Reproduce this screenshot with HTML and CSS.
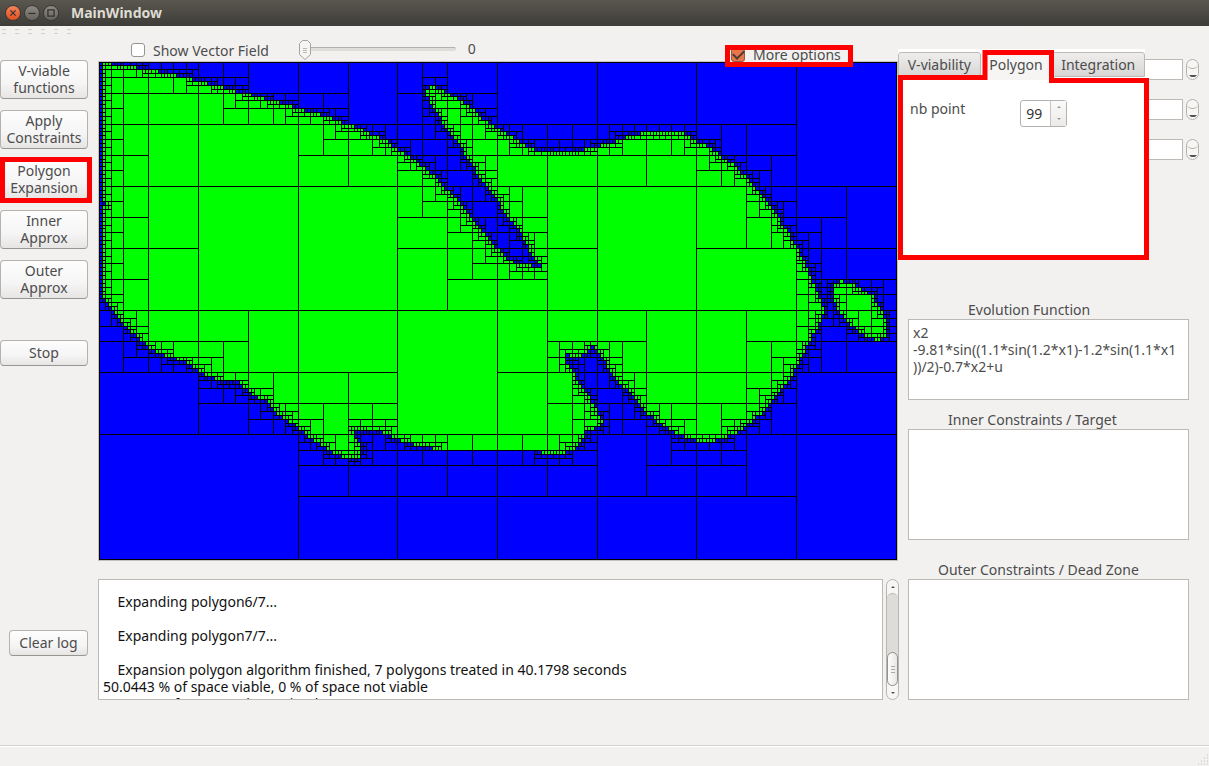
FILE: index.html
```html
<!DOCTYPE html>
<html lang="en">
<head>
<meta charset="utf-8">
<title>MainWindow</title>
<link rel="stylesheet" href="styles.css">
</head>
<body>
<header class="titlebar">
  <button class="win win-close" type="button" aria-label="Close"><svg viewBox="0 0 16 16"><path d="M5 5l6 6M11 5l-6 6"/></svg></button>
  <button class="win" type="button" aria-label="Minimize"><svg viewBox="0 0 16 16"><path d="M4 8.500h8"/></svg></button>
  <button class="win" type="button" aria-label="Maximize"><svg viewBox="0 0 16 16"><path d="M4.500 4.500h7v7h-7z"/></svg></button>
  <h1 class="title">MainWindow</h1>
</header>
<main class="main">
  <nav class="side">
    <div class="grips"><i></i><i></i><i></i><i></i><i></i><i></i></div>
    <div class="actions">
      <button class="btn tall" type="button">V-viable<br>functions</button>
      <button class="btn tall" type="button">Apply<br>Constraints</button>
      <button class="btn tall marked" type="button">Polygon<br>Expansion</button>
      <button class="btn tall" type="button">Inner<br>Approx</button>
      <button class="btn tall" type="button">Outer<br>Approx</button>
    </div>
    <button class="btn stop" type="button">Stop</button>
    <button class="btn clear" type="button">Clear log</button>
  </nav>
  <section class="center">
    <div class="options">
      <label class="check"><input class="box" type="checkbox">Show Vector Field</label>
      <div class="slider">
        <input class="range" type="range" min="0" max="100" value="0" aria-label="Vector field density">
        <svg class="thumb" viewBox="0 0 12 20"><path d="M3.500 .5h5l3 3V14.500L6 19.500.5 14.500V3.500z" fill="#f6f5f3" stroke="#a5a39e" stroke-linejoin="round"/><path d="M4 8.500h4M4 10.500h4M4 12.500h4" stroke="#bbb9b4"/></svg>
      </div>
      <output class="value">0</output>
      <label class="more"><input class="box" type="checkbox" checked><span>More options</span></label>
    </div>
    <div class="plot"><svg id="paving" viewBox="0 0 798 498" role="img" aria-label="Viability kernel paving"></svg></div>
    <div class="logrow">
      <textarea class="field log" readonly aria-label="Log">    Expanding polygon6/7...

    Expanding polygon7/7...

    Expansion polygon algorithm finished, 7 polygons treated in 40.1798 seconds
50.0443 % of space viable, 0 % of space not viable
49.955 % of space undetermined</textarea>
      <div class="scroll">
        <button class="arrow up" type="button" aria-label="Scroll up"></button>
        <div class="rail"><div class="knob"></div></div>
        <button class="arrow down" type="button" aria-label="Scroll down"></button>
      </div>
    </div>
  </section>
  <section class="right">
    <div class="params">
      <div class="param"><input class="field num" type="text" aria-label="Parameter 1"><span class="pill"></span></div>
      <div class="param"><input class="field num" type="text" aria-label="Parameter 2"><span class="pill"></span></div>
      <div class="param"><input class="field num" type="text" aria-label="Parameter 3"><span class="pill"></span></div>
    </div>
    <div class="tabs">
      <div class="tablist" role="tablist">
        <button class="tab" type="button" role="tab">V-viability</button>
        <button class="tab active" type="button" role="tab" aria-selected="true">Polygon</button>
        <button class="tab" type="button" role="tab">Integration</button>
      </div>
      <div class="pane">
        <label for="nb">nb point</label>
        <div class="spin"><input id="nb" type="text" value="99"><span class="steps"></span></div>
      </div>
      <svg class="outline" viewBox="0 0 252 212"><path d="M2 28.500H87V3.500H153.500V31.500H248.500V208.500H2.500V26"/></svg>
    </div>
    <div class="group evo">
      <label for="evo">Evolution Function</label>
      <textarea id="evo" class="field">x2
-9.81*sin((1.1*sin(1.2*x1)-1.2*sin(1.1*x1
))/2)-0.7*x2+u</textarea>
    </div>
    <div class="group inner">
      <label for="inner">Inner Constraints / Target</label>
      <textarea id="inner" class="field"></textarea>
    </div>
    <div class="group outer">
      <label for="outer">Outer Constraints / Dead Zone</label>
      <textarea id="outer" class="field"></textarea>
    </div>
  </section>
</main>
<footer class="status"><svg class="sizegrip" viewBox="0 0 12 12"><path d="M10 1h1M7 4h1M10 4h1M4 7h1M7 7h1M10 7h1M1 10h1M4 10h1M7 10h1M10 10h1" stroke="#c2c0bc" stroke-width="1"/></svg></footer>
<script src="paving.js"></script>
</body>
</html>
```

FILE: styles.css
```css
* { box-sizing: border-box; }
body {
  margin: 0;
  min-height: 100vh;
  display: flex;
  flex-direction: column;
  background: #f2f1f0;
  color: #4c4c4c;
  font: 14px/17px "Noto Sans", "Open Sans", sans-serif;
}
button, input, textarea { font: inherit; color: inherit; }
button { padding: 0; border: 0; }

.titlebar {
  height: 26px;
  display: flex;
  align-items: center;
  gap: 3px;
  padding: 0 5px 1px;
  background: linear-gradient(#5a574f, #3d3c38);
}
.win {
  width: 16px;
  height: 16px;
  border-radius: 50%;
  border: 1px solid #3a3935;
  background: linear-gradient(#8c8a82, #67655e);
}
.win-close { background: linear-gradient(#f4835c, #e2501f); }
.win svg { display: block; width: 14px; height: 14px; }
.win path { fill: none; stroke: #35332f; stroke-width: 1.5; }
.title { margin: 0 0 0 9px; font-size: 14px; font-weight: 700; color: #dfdbd2; }

.main { flex: 1; display: grid; grid-template-columns: 98px minmax(0, 1fr) 311px; }

.side { display: flex; flex-direction: column; align-items: flex-start; }
.grips { height: 34px; display: flex; gap: 9px; padding: 3px 2px; }
.grips i {
  width: 4px;
  height: 8px;
  background: repeating-linear-gradient(#d2d0cd 0 1px, #f2f1f0 1px 4px);
}
.actions { display: flex; flex-direction: column; gap: 11px; }
.btn {
  width: 88px;
  padding-bottom: 1px;
  border: 1px solid #b5b2ad;
  border-bottom-color: #989691;
  border-radius: 4px;
  background: linear-gradient(#fdfdfd, #f6f5f5 60%, #e6e5e4);
  text-align: center;
}
.tall { height: 39px; }
.stop { height: 26px; margin-top: 41px; }
.clear { width: 79px; height: 26px; margin: 264px 0 0 9px; }
.marked { position: relative; }
.marked::after {
  content: "";
  position: absolute;
  inset: -4px -5px -5px -1px;
  border: 5px solid #f00;
}

.center { display: flex; flex-direction: column; min-width: 0; }
.options { height: 35px; display: flex; align-items: flex-start; padding: 14px 45px 0 33px; }
.check { display: flex; align-items: center; gap: 8px; height: 20px; }
.box {
  appearance: none;
  width: 14px;
  height: 14px;
  margin: 0;
  flex: none;
  border: 1px solid #979591;
  border-radius: 3px;
  background: #fff;
}
.slider { position: relative; width: 157px; height: 20px; margin-left: 30px; }
.range { appearance: none; display: block; width: 100%; height: 17px; margin: 0; background: none; }
.range::-webkit-slider-runnable-track {
  height: 4px;
  border-top: 1px solid #b3b1ac;
  border-radius: 2px;
  background: #dfddda;
}
.range::-webkit-slider-thumb { appearance: none; width: 12px; height: 4px; }
.thumb { position: absolute; left: 0; top: 0; width: 12px; height: 20px; }
.value { margin-left: 12px; }
.more {
  position: relative;
  z-index: 1;
  display: flex;
  align-items: flex-start;
  gap: 8px;
  width: 128px;
  height: 22px;
  margin: 5px 0 0 auto;
  border: 5px solid #f00;
  overflow: hidden;
  background: #f2f1f0;
}
.more .box {
  background: #e9764a;
  border-color: #8f5b45;
  margin: -2px 0 0 1px;
  display: grid;
  place-items: center;
}
.more .box::before {
  content: "";
  width: 9px;
  height: 5px;
  margin-top: -3px;
  border: solid #4a3a34;
  border-width: 0 0 2px 2px;
  rotate: -45deg;
}
.more span { margin-top: -4px; white-space: nowrap; }
.options { padding-top: 14px; }
.plot { border: 1px solid #c4c2be; background: #00f; }
.plot svg { display: block; width: 100%; height: auto; }

.logrow { display: flex; gap: 3px; height: 121px; margin: 18px -1px 0 0; }
.field { border: 1px solid #bdbab5; border-radius: 0; background: #fff; outline: none; resize: none; }
textarea.field { display: block; overflow: hidden; white-space: pre; margin: 0; padding: 4px; }
textarea.log { flex: 1; min-width: 0; padding-top: 13px; color: #111; }
.scroll {
  width: 13px;
  display: flex;
  flex-direction: column;
  border: 1px solid #b8b5b0;
  border-radius: 7px;
  background: #f7f6f5;
}
.arrow { height: 13px; background: none; display: grid; place-items: center; }
.arrow::before { content: ""; border: 2px solid transparent; }
.up::before { border-bottom-color: #555; margin-top: -2px; }
.down::before { border-top-color: #555; margin-top: 2px; }
.rail {
  flex: 1;
  display: flex;
  align-items: flex-end;
  border-top: 1px solid #b8b5b0;
  border-radius: 6px;
  background: #dddcd9;
}
.knob {
  width: 11px;
  height: 34px;
  display: grid;
  place-items: center;
  border: 1px solid #93918c;
  border-radius: 6px;
  background: linear-gradient(90deg, #fcfcfc, #e8e7e5);
}
.knob::before {
  content: "";
  width: 4px;
  height: 7px;
  background: repeating-linear-gradient(#aaa 0 1px, transparent 1px 3px);
}

.right { position: relative; display: flex; flex-direction: column; padding: 33px 10px 0; }
.params { height: 242px; display: flex; flex-direction: column; gap: 19px; }
.param { display: flex; justify-content: flex-end; gap: 3px; }
.num { width: 160px; height: 21px; }
.pill {
  width: 13px;
  height: 21px;
  position: relative;
  border: 1px solid #b5b2ad;
  border-radius: 7px;
  background: #f7f6f5;
}
.pill::before {
  content: "";
  display: block;
  height: 8px;
  border-bottom: 1px solid #b5b2ad;
  border-radius: 50%;
}
.pill::after {
  content: "";
  display: block;
  width: 4px;
  height: 4px;
  margin: 6px auto 0;
  border: 2px solid transparent;
  border-top-color: #555;
  border-bottom: 0;
}
.tabs { position: absolute; left: 0; top: 23px; width: 247px; height: 211px; background: #fff; }
.tablist { display: flex; align-items: flex-end; height: 31px; }
.tab {
  flex: 1 1 auto;
  height: 25px;
  margin-bottom: 3px;
  border: 1px solid #bdbab5;
  border-radius: 3px 3px 0 0;
  background: linear-gradient(#efeeed, #d8d6d4);
}
.active { height: 28px; margin-bottom: 0; padding-bottom: 3px; border: 0; background: #f6f5f4; }
.pane { display: flex; gap: 55px; padding: 20px 12px; }
.spin {
  display: flex;
  width: 47px;
  height: 27px;
  border: 1px solid #b5b2ad;
  border-radius: 3px;
  background: #fff;
}
.spin input { width: 29px; padding: 0 0 0 5px; border: 0; background: none; color: #333; outline: none; }
.steps {
  flex: 1;
  display: flex;
  flex-direction: column;
  align-items: center;
  justify-content: space-between;
  padding: 3px 0 4px;
  border-left: 1px solid #c6c4c0;
  background: linear-gradient(#fbfbfb, #eceae8);
}
.steps::before, .steps::after { content: ""; border: 2px solid transparent; }
.steps::before { border-bottom-color: #999; }
.steps::after { border-top-color: #999; }
.outline { position: absolute; left: 0; top: 0; width: 252px; height: 212px; pointer-events: none; }
.outline path { fill: none; stroke: #f00; stroke-width: 5; }
.group { display: flex; flex-direction: column; padding-right: 10px; }
.group label { height: 18px; }
.evo label { padding-left: 60px; }
.evo textarea { height: 81px; }
.inner { margin-top: 11px; }
.inner label { padding-left: 40px; }
.inner textarea { height: 111px; }
.outer { margin-top: 21px; }
.outer label { padding-left: 30px; }
.outer textarea { height: 121px; }

.status {
  height: 21px;
  display: flex;
  justify-content: flex-end;
  align-items: flex-end;
  border-top: 1px solid #d5d3d0;
  box-shadow: inset 0 1px #fff;
}
.sizegrip { width: 12px; height: 12px; }
```

FILE: paving.js
```js
// Viable region outlines, in plot coordinates offset by (99, 62).
const W = 797, H = 497, OX = 99, OY = 62;
const EDGE = OX + W / 256;
const FLOOR = OY + H * 25 / 32;
const body = [[EDGE,62],[114.7,64.5],[128,66.7],[141,68.7],[148.5,70],[164.7,73.3],[174,75.3],[186,77.3],[198,80.7],[214.7,84.7],[226,88],[239.7,92.3],[248.3,93.7],[264.7,99.3],[279.7,102.7],[298,108.7],[314.7,112.7],[328,116.7],[343,122.7],[351,125.3],[360,128.5],[373,136],[385.3,140.5],[396.7,147.7],[410,156.7],[423,166.7],[436.7,178.3],[447.3,190],[460,203.3],[471.7,216.7],[475,223.3],[486,235],[497.3,248.3],[506.7,257.3],[516.7,264],[528,264],[536,267],[541,267],[536.7,261.7],[531.7,253.3],[526.7,245],[520,233.3],[511.7,220],[503.3,210],[497.3,200],[488.3,187.3],[480,176.7],[472.7,166.7],[466,156.7],[460,145],[450,131.7],[443.3,123.3],[438.3,115],[431.7,105],[425,93.3],[426.7,88.3],[431.7,85.7],[440,89.3],[447.3,93.3],[460,100],[471.7,108.3],[485,120],[497.3,128.3],[510,136.7],[522.3,144],[535,149.3],[546.7,151.3],[573,151.5],[590,148.3],[600,145.7],[616.7,141],[626.7,137],[643.3,133.5],[656.7,132.8],[681.7,133.3],[690,137],[698.3,141.7],[710,147.7],[721.7,156.7],[733.3,165],[746,176.7],[753.3,186.5],[763.3,196.7],[771.7,208.3],[780,220],[786.7,230],[796,246.7],[803.3,260],[810,273.3],[816.7,290],[821,301.7],[825,313],[821.3,318],[816.7,330],[810,341.7],[803.3,353.3],[796,366.7],[788.3,381],[780,391.7],[771.7,401.7],[763.3,411.7],[753.3,420],[743.3,428.3],[733.3,435],[720,440],[703.3,442],[690,439.3],[678.3,435],[666.7,428.3],[656.7,421.7],[646.7,412.7],[636.7,401.7],[626.7,390],[616.7,380],[610,371],[603.3,360],[596.7,351.7],[593,346],[590,350],[583,355],[573,357.3],[566.7,354.3],[566,361.7],[570.7,368.3],[575,376.7],[581.7,386.7],[590,398.3],[595,408.3],[600,416.7],[602.7,422.7],[600,427.5],[586.7,431.7],[581.7,440],[575,448.3],[565,453],[541.7,453],[537,FLOOR],[440,FLOOR],[426.7,447.3],[410,443.3],[396.7,439.5],[386.7,435],[380,431.7],[360,430.5],[353,428.3],[355,436],[357,441],[361,445],[360,457],[352,458.5],[343,456.7],[331.3,451.7],[319.7,443.3],[306.3,435],[298,428.3],[284.7,418.3],[273,410],[264.7,400.7],[254.7,396],[246.3,389.3],[239.7,382],[224,381],[213,378.3],[201.3,371.7],[186.3,363.3],[173,357.3],[156.3,352.7],[148,346.7],[138,338.3],[129.7,330],[121.3,321.7],[113,310],[104.7,301],[EDGE,297]];
const island = [[833,287],[836.7,282.5],[841.7,281.3],[853,282],[858,287],[865,291.7],[871.7,295],[878,305],[880,308],[885,316.7],[887.7,326.7],[886.7,335],[880,340],[871.7,339.3],[861.7,335],[855,329],[848,321.7],[841.7,312.7],[836.7,306.7],[833.3,300]];
const notch = [[103,203],[105,204],[108,207],[105,207]];

const shapes = [body, island, notch].map(s => s.map(([x, y]) => [x - OX, y - OY]));
const segments = shapes.flatMap(s => s.map((p, i) => [p, s[(i + 1) % s.length]]));

// Liang-Barsky: does the segment pass through the open box?
function crosses([[ax, ay], [bx, by]], x0, y0, x1, y1) {
  const e = 1e-6, dx = bx - ax, dy = by - ay;
  let lo = 0, hi = 1;
  for (const [p, q] of [[-dx, ax - x0 - e], [dx, x1 - e - ax], [-dy, ay - y0 - e], [dy, y1 - e - ay]]) {
    if (p === 0) { if (q < 0) return false; continue; }
    const r = q / p;
    if (p < 0) lo = Math.max(lo, r); else hi = Math.min(hi, r);
    if (lo > hi) return false;
  }
  return true;
}

function viable(x, y) {
  let hit = false;
  for (const [[ax, ay], [bx, by]] of segments)
    if ((ay > y) !== (by > y) && x < ax + (y - ay) * (bx - ax) / (by - ay)) hit = !hit;
  return hit;
}

let green = "", lines = "M.5 .5H797.5V497.5H.5Z";

// Bisect x and y in turn until a box is wholly in or out.
function pave(x0, y0, x1, y1, depth, near) {
  const inside = near.filter(s => crosses(s, x0, y0, x1, y1));
  if ((inside.length && depth < 15) || depth < 4) {
    if (depth % 2 === 0) {
      const m = (x0 + x1) / 2, c = Math.floor(m) + .5;
      pave(x0, y0, m, y1, depth + 1, inside);
      pave(m, y0, x1, y1, depth + 1, inside);
      lines += `M${c} ${Math.floor(y0)}V${Math.floor(y1) + 1}`;
    } else {
      const m = (y0 + y1) / 2, c = Math.floor(m) + .5;
      pave(x0, y0, x1, m, depth + 1, inside);
      pave(x0, m, x1, y1, depth + 1, inside);
      lines += `M${Math.floor(x0)} ${c}H${Math.floor(x1) + 1}`;
    }
  } else if (viable((x0 + x1) / 2, (y0 + y1) / 2)) {
    green += `M${Math.floor(x0)} ${Math.floor(y0)}H${Math.floor(x1)}V${Math.floor(y1)}H${Math.floor(x0)}Z`;
  }
}
pave(0, 0, W, H, 0, segments);

document.getElementById("paving").innerHTML =
  `<g shape-rendering="crispEdges"><path fill="#0f0" d="${green}"/><path fill="none" stroke="#000" d="${lines}"/></g>`;
```
